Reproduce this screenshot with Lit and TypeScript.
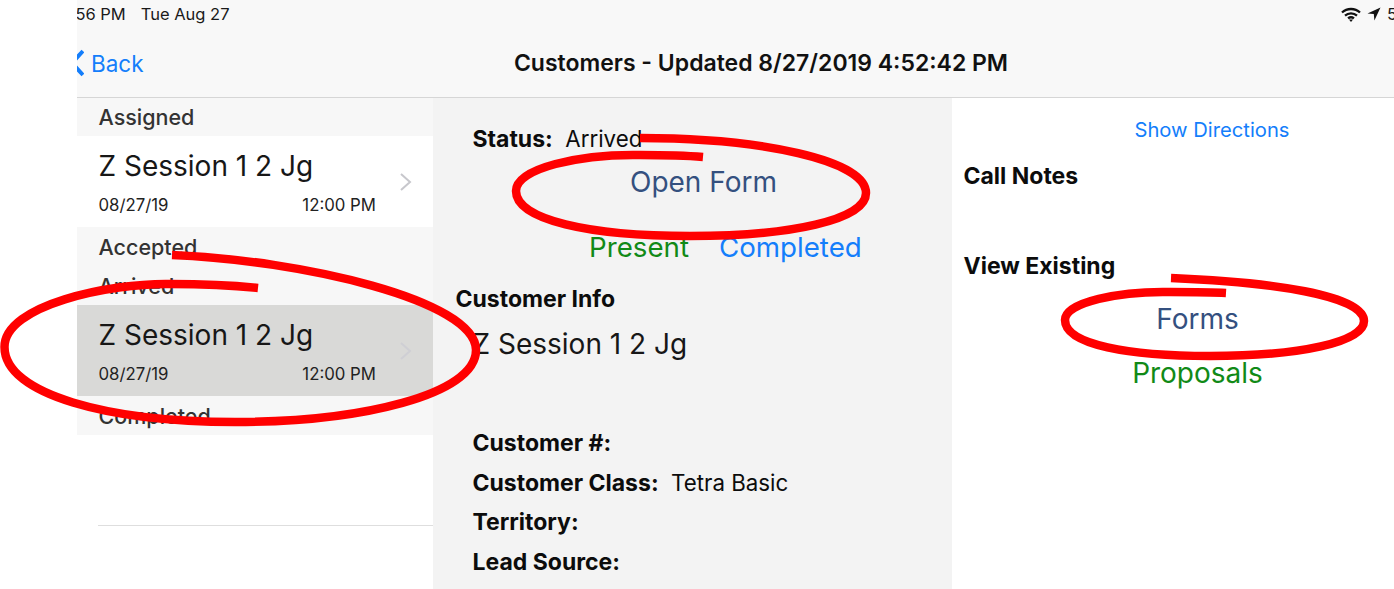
import { LitElement, html, css, svg } from "lit";
import { customElement } from "lit/decorators.js";

@customElement("app-root")
export class AppRoot extends LitElement {
  static styles = css`
    :host {
      display: block;
      position: relative;
      width: 1394px;
      height: 589px;
      overflow: hidden;
      background: #fff;
      font-family: Inter, "Liberation Sans", sans-serif;
      color: #0c0c0c;
    }
    .page { padding-left: 77px; height: 589px; box-sizing: border-box; display: flex; flex-direction: column; overflow: hidden; }
    .top { background: #f8f8f8; border-bottom: 1px solid #d6d6d6; height: 98px; box-sizing: border-box; flex: none; }
    .status { height: 28px; display: flex; align-items: center; justify-content: space-between; font-size: 16.5px; overflow: hidden; white-space: nowrap; color: #1a1a1a; }
    .time { margin-left: -17px; display: flex; gap: 15px; }
    .sys { display: flex; align-items: center; gap: 6px; margin-right: -30px; }
    .nav { height: 69px; display: grid; grid-template-columns: 1fr auto 1fr; align-items: center; padding-top: 1px; box-sizing: border-box; }
    .back { display: flex; align-items: center; gap: 7px; color: #147efb; font-size: 22.5px; overflow: hidden; }
    .back svg { flex: none; margin-left: -8px; }
    .title { font-size: 23px; font-weight: 600; margin-left: 51px; color: #111; white-space: nowrap; }
    .cols { flex: 1; display: grid; grid-template-columns: 356px 519px 1fr; min-height: 0; }
    .head { height: 39px; background: #f7f7f7; display: flex; align-items: center; padding-left: 21.5px; font-size: 21.5px; font-weight: 500; color: #333; }
    .head.first { height: 38px; }
    .item { height: 91px; box-sizing: border-box; background: #fff; padding: 12px 57px 0 21.5px; position: relative; }
    .item.sel { background: #d9d9d7; }
    .name { font-size: 28px; line-height: 36px; white-space: nowrap; color: #171717; }
    .meta { display: flex; justify-content: space-between; font-size: 16.8px; line-height: 20px; margin-top: 11px; color: #222; }
    .chev { position: absolute; right: 20px; top: 35px; }
    .rule { height: 1px; background: #dedede; margin: 90px 0 0 21px; }
    .mid { background: #f3f3f3; padding-top: 21px; display: flex; flex-direction: column; }
    .row { display: flex; align-items: center; font-size: 22.3px; height: 39.5px; padding-left: 39.5px; white-space: nowrap; gap: 12.5px; }
    b { font-weight: 700; }
    .row b { font-size: 23px; }
    .center { display: flex; justify-content: center; align-items: center; height: 40px; font-size: 28px; white-space: nowrap; }
    .navy { color: #34507f; }
    .green { color: #118a17; }
    .blue { color: #147efb; }
    .open { margin: 3px 0 0 22px; }
    .actions { margin: 25px 0 0 133px; justify-content: flex-start; padding-left: 23px; gap: 30px; font-size: 27.7px; }
    .info { font-size: 23px; font-weight: 700; height: 30px; line-height: 30px; margin: 17px 0 0 22.5px; }
    .cname { font-size: 28px; height: 40px; line-height: 40px; margin: 10px 0 60px 39.5px; color: #171717; white-space: nowrap; }
    .right { padding-top: 16px; display: flex; flex-direction: column; }
    .dir { font-size: 20.2px; height: 30px; justify-content: center; display: flex; align-items: center; padding-left: 78px; }
    .label { font-size: 23px; font-weight: 700; height: 30px; line-height: 30px; padding-left: 11.5px; margin-top: 17px; }
    .label.view { margin-top: 60px; }
    .link { padding-left: 49px; }
    .forms { margin-top: 18px; }
    .props { margin-top: 14px; }
    .ink { position: absolute; inset: 0; pointer-events: none; }
    .ink path { fill: none; stroke: #ff0000; stroke-width: 8.5; stroke-linecap: butt; }
  `;

  private item(sel: boolean) {
    return html`<div class="item ${sel ? "sel" : ""}">
      <div class="name">Z Session 1 2 Jg</div>
      <div class="meta"><span>08/27/19</span><span>12:00 PM</span></div>
      <svg class="chev" width="14" height="22" viewBox="0 0 14 22">
        <path d="M2 3l9 8-9 8" fill="none" stroke="${sel ? "#cfcfd4" : "#c7c7cc"}" stroke-width="2"/>
      </svg>
    </div>`;
  }

  render() {
    return html`
      <div class="page">
        <div class="top">
          <div class="status">
            <div class="time"><span>4:56 PM</span><span>Tue Aug 27</span></div>
            <div class="sys">
              <svg width="20" height="15" viewBox="0 0 20 15">
                <path d="M1 5.500C6 .8 14 .8 19 5.500M4 8.600c3.400-3 8.600-3 12 0M7 11.400c1.800-1.400 4.200-1.400 6 0" fill="none" stroke="#111" stroke-width="2.300"/>
                <path d="M10 15l-2-2.400h4z" fill="#111"/>
              </svg>
              <svg width="14" height="14" viewBox="0 0 14 14"><path d="M13.500 .5L.5 6.500l6.300.6.600 6.400z" fill="#111"/></svg>
              <span>54%</span>
            </div>
          </div>
          <div class="nav">
            <div class="back">
              <svg width="15" height="30" viewBox="0 0 15 30"><path d="M14 3L3 15l11 12" fill="none" stroke="#147efb" stroke-width="4"/></svg>
              <span>Back</span>
            </div>
            <div class="title">Customers - Updated 8/27/2019 4:52:42 PM</div>
            <div></div>
          </div>
        </div>
        <div class="cols">
          <div class="list">
            <div class="head first">Assigned</div>
            ${this.item(false)}
            <div class="head">Accepted</div>
            <div class="head">Arrived</div>
            ${this.item(true)}
            <div class="head">Completed</div>
            <div class="rule"></div>
          </div>
          <div class="mid">
            <div class="row"><b>Status:</b><span>Arrived</span></div>
            <div class="center navy open">Open Form</div>
            <div class="center actions"><span class="green">Present</span><span class="blue">Completed</span></div>
            <div class="info">Customer Info</div>
            <div class="cname">Z Session 1 2 Jg</div>
            <div class="row"><b>Customer #:</b></div>
            <div class="row"><b>Customer Class:</b><span>Tetra Basic</span></div>
            <div class="row"><b>Territory:</b></div>
            <div class="row"><b>Lead Source:</b></div>
          </div>
          <div class="right">
            <div class="dir blue">Show Directions</div>
            <div class="label">Call Notes</div>
            <div class="label view">View Existing</div>
            <div class="center navy link forms">Forms</div>
            <div class="center green link props">Proposals</div>
          </div>
        </div>
      </div>
      <svg class="ink" width="1394" height="589" viewBox="0 0 1394 589">
        ${svg`
          <path d="M172 255C300 260 476 300 476 350C476 395 360 422 235 422C110 422 4.500 395 4.500 347C4.500 305 110 283 170 284C200 284 230 285 258 288"/>
          <path d="M640 138C760 138 866 160 866 193C866 220 790 236 690 236C590 236 516 220 516 191C516 168 580 154 640 155C660 155 680 155 703 157"/>
          <path d="M1171 278C1270 282 1364 295 1364 321C1364 342 1300 356 1210 356C1130 356 1065 345 1065 320C1065 302 1120 291 1170 292C1190 292 1210 292 1226 293"/>
        `}
      </svg>
    `;
  }
}
